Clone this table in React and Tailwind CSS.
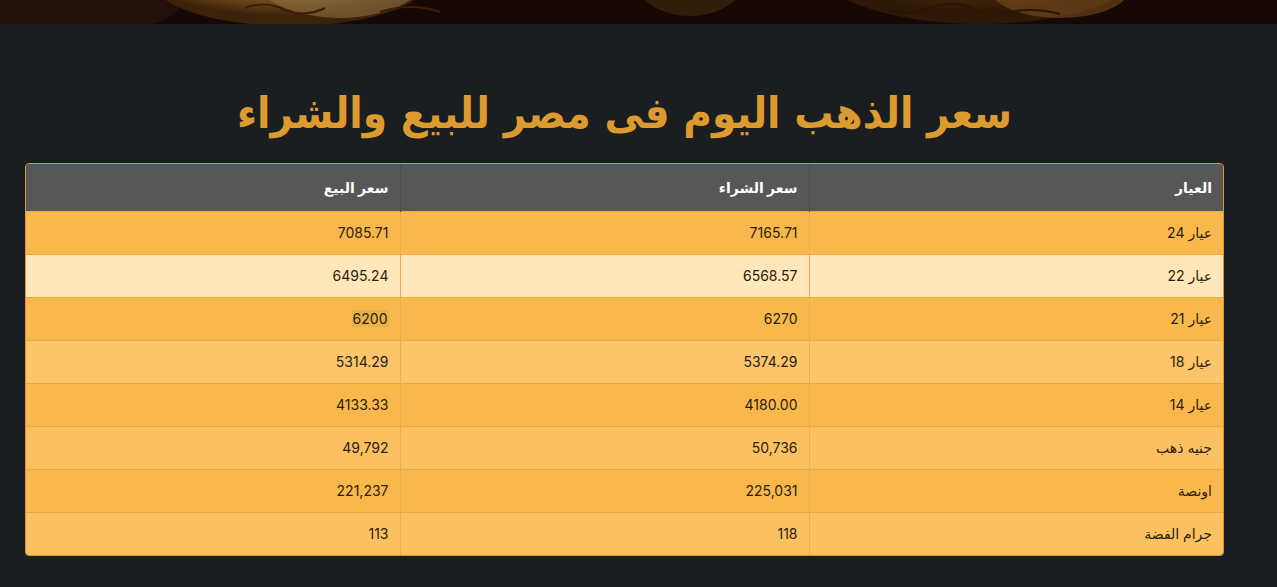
import React from "react";

const rows = [
  { k: "عيار 24", buy: "7165.71", sell: "7085.71", bg: "bg-[#f9b84b]" },
  { k: "عيار 22", buy: "6568.57", sell: "6495.24", bg: "bg-[#ffe7b9]" },
  { k: "عيار 21", buy: "6270", sell: "6200", bg: "bg-[#f9b84b]", mark: true },
  { k: "عيار 18", buy: "5374.29", sell: "5314.29", bg: "bg-[#fcc56a]" },
  { k: "عيار 14", buy: "4180.00", sell: "4133.33", bg: "bg-[#f9b84b]" },
  { k: "جنيه ذهب", buy: "50,736", sell: "49,792", bg: "bg-[#fbc160]" },
  { k: "اونصة", buy: "225,031", sell: "221,237", bg: "bg-[#f9b84b]" },
  { k: "جرام الفضة", buy: "118", sell: "113", bg: "bg-[#fbc160]" },
];

function Banner() {
  return (
    <div className="h-[24px] w-full overflow-hidden bg-[#1a0d06]">
      <svg width="1277" height="24" viewBox="0 0 1277 24" preserveAspectRatio="none">
        <defs>
          <radialGradient id="g1" cx="50%" cy="30%" r="60%">
            <stop offset="0%" stopColor="#a9823f" />
            <stop offset="70%" stopColor="#7a5020" />
            <stop offset="100%" stopColor="#3b2209" />
          </radialGradient>
          <radialGradient id="g2" cx="50%" cy="30%" r="60%">
            <stop offset="0%" stopColor="#8a5a1e" />
            <stop offset="100%" stopColor="#2e1806" />
          </radialGradient>
        </defs>
        <rect width="1277" height="24" fill="#160804" />
        <ellipse cx="70" cy="4" rx="110" ry="30" fill="#24100a" />
        <ellipse cx="290" cy="-22" rx="140" ry="48" fill="url(#g1)" />
        <ellipse cx="340" cy="-30" rx="90" ry="48" fill="#8f7045" opacity="0.6" />
        <ellipse cx="690" cy="-30" rx="60" ry="46" fill="#3a220c" opacity="0.8" />
        <ellipse cx="980" cy="-40" rx="170" ry="64" fill="url(#g2)" />
        <ellipse cx="1060" cy="-12" rx="70" ry="30" fill="#8a5a22" opacity="0.5" />
        <path d="M245 8 q20 -8 40 2 q20 8 40 -2" stroke="#3c1e08" strokeWidth="2" fill="none" />
        <path d="M380 12 q30 -10 60 0" stroke="#3c1e08" strokeWidth="2" fill="none" />
        <path d="M880 8 q25 10 50 0 q25 -10 50 4" stroke="#2a1404" strokeWidth="2" fill="none" />
        <path d="M1000 14 q30 -8 60 0" stroke="#2a1404" strokeWidth="2" fill="none" />
      </svg>
    </div>
  );
}

export default function App() {
  return (
    <div className="min-h-[587px] w-full bg-[#1b1e20] font-['Inter','DejaVu_Sans',sans-serif]">
      <Banner />
      <div className="ml-[25px] w-[1199px] pt-[60px]" dir="rtl">
        <h1 className="mb-[20px] h-[59px] scale-x-[0.91] text-center text-[43px] font-bold leading-[59px] text-[#dd9b2f] font-['DejaVu_Sans',sans-serif]">
          سعر الذهب اليوم فى مصر للبيع والشراء
        </h1>
        <div className="overflow-hidden rounded-[4px] border border-[#cf9b3c]">
          <table className="w-full table-fixed border-collapse text-[14px] text-[#2a1d0c]">
            <colgroup>
              <col className="w-[414px]" />
              <col className="w-[409px]" />
              <col />
            </colgroup>
            <thead>
              <tr className="h-[47px] bg-[#575757] text-white">
                <th className="border-l border-[#4d4d4d] px-[11px] text-right text-[14px] font-bold">العيار</th>
                <th className="border-l border-[#4d4d4d] px-[11px] text-right text-[14px] font-bold">سعر الشراء</th>
                <th className="px-[11px] text-right text-[14px] font-bold">سعر البيع</th>
              </tr>
            </thead>
            <tbody>
              {rows.map((r) => (
                <tr key={r.k} className={`h-[43px] border-t border-[#e6a945] ${r.bg}`}>
                  <td className="border-l border-[#e8ae4f] px-[11px] text-right">{r.k}</td>
                  <td className="border-l border-[#e8ae4f] px-[11px] text-right">{r.buy}</td>
                  <td className="px-[11px] text-right">
                    {r.mark ? <span className="bg-[#e9b04e] px-[1px]">{r.sell}</span> : r.sell}
                  </td>
                </tr>
              ))}
            </tbody>
          </table>
        </div>
      </div>
    </div>
  );
}
